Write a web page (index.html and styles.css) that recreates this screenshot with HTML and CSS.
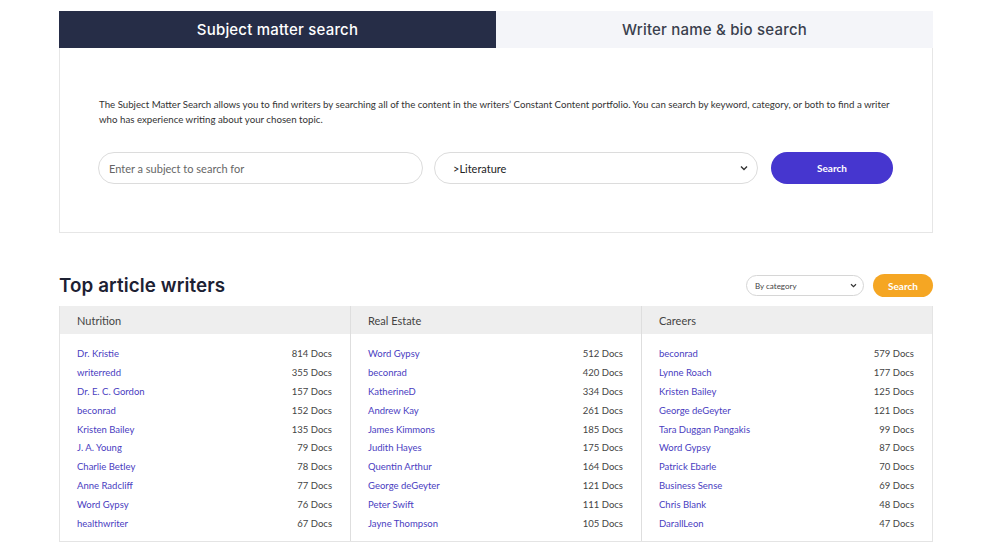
FILE: index.html
```html
<!DOCTYPE html>
<html>
<head>
<meta charset="utf-8">
<link rel="stylesheet" href="styles.css">
</head>
<body>
<div class="page">
  <div class="tabs">
    <div class="tab active">Subject matter search</div>
    <div class="tab">Writer name &amp; bio search</div>
  </div>
  <div class="panel">
    <p class="desc">The Subject Matter Search allows you to find writers by searching all of the content in the writers’ Constant Content portfolio. You can search by keyword, category, or both to find a writer who has experience writing about your chosen topic.</p>
    <div class="form-row">
      <div class="field input">Enter a subject to search for</div>
      <div class="field select"><span>&gt;Literature</span><svg class="chev" width="8" height="6" viewBox="0 0 8 6"><path d="M1 1.5 L4 4.5 L7 1.5" fill="none" stroke="#333" stroke-width="1.4"/></svg></div>
      <div class="btn-primary">Search</div>
    </div>
  </div>

  <div class="top-row">
    <h2 class="title">Top article writers</h2>
    <div class="filters">
      <div class="small-select"><span>By category</span><svg width="7" height="5" viewBox="0 0 8 6"><path d="M1 1.5 L4 4.5 L7 1.5" fill="none" stroke="#333" stroke-width="1.4"/></svg></div>
      <div class="btn-orange">Search</div>
    </div>
  </div>

  <div class="table">
    <div class="col">
      <div class="col-head">Nutrition</div>
      <ul class="list">
        <li><a>Dr. Kristie</a><span>814 Docs</span></li>
        <li><a>writerredd</a><span>355 Docs</span></li>
        <li><a>Dr. E. C. Gordon</a><span>157 Docs</span></li>
        <li><a>beconrad</a><span>152 Docs</span></li>
        <li><a>Kristen Bailey</a><span>135 Docs</span></li>
        <li><a>J. A. Young</a><span>79 Docs</span></li>
        <li><a>Charlie Betley</a><span>78 Docs</span></li>
        <li><a>Anne Radcliff</a><span>77 Docs</span></li>
        <li><a>Word Gypsy</a><span>76 Docs</span></li>
        <li><a>healthwriter</a><span>67 Docs</span></li>
      </ul>
    </div>
    <div class="col">
      <div class="col-head">Real Estate</div>
      <ul class="list">
        <li><a>Word Gypsy</a><span>512 Docs</span></li>
        <li><a>beconrad</a><span>420 Docs</span></li>
        <li><a>KatherineD</a><span>334 Docs</span></li>
        <li><a>Andrew Kay</a><span>261 Docs</span></li>
        <li><a>James Kimmons</a><span>185 Docs</span></li>
        <li><a>Judith Hayes</a><span>175 Docs</span></li>
        <li><a>Quentin Arthur</a><span>164 Docs</span></li>
        <li><a>George deGeyter</a><span>121 Docs</span></li>
        <li><a>Peter Swift</a><span>111 Docs</span></li>
        <li><a>Jayne Thompson</a><span>105 Docs</span></li>
      </ul>
    </div>
    <div class="col">
      <div class="col-head">Careers</div>
      <ul class="list">
        <li><a>beconrad</a><span>579 Docs</span></li>
        <li><a>Lynne Roach</a><span>177 Docs</span></li>
        <li><a>Kristen Bailey</a><span>125 Docs</span></li>
        <li><a>George deGeyter</a><span>121 Docs</span></li>
        <li><a>Tara Duggan Pangakis</a><span>99 Docs</span></li>
        <li><a>Word Gypsy</a><span>87 Docs</span></li>
        <li><a>Patrick Ebarle</a><span>70 Docs</span></li>
        <li><a>Business Sense</a><span>69 Docs</span></li>
        <li><a>Chris Blank</a><span>48 Docs</span></li>
        <li><a>DarallLeon</a><span>47 Docs</span></li>
      </ul>
    </div>
  </div>
</div>
</body>
</html>
```
FILE: styles.css
```css
* { box-sizing: border-box; }
html, body { margin: 0; padding: 0; background: #fff; }
body { font-family: "Lato", "Liberation Sans", sans-serif; color: #333; }

.page { width: 874px; margin: 0 0 0 59px; padding-top: 11px; }

.tabs { display: flex; height: 37px; }
.tab {
  flex: 1; display: flex; align-items: center; justify-content: center;
  font-family: "Inter", "Noto Sans", sans-serif; font-weight: 500; font-size: 15px;
  background: #f4f5f9; color: #3a3f4d; letter-spacing: 0.2px;
}
.tab.active { background: #262d47; color: #fff; }

.panel {
  border: 1px solid #e6e6e6; border-top: none;
  padding: 49px 38px 48px 38px;
}
.desc { margin: 0 0 25px 1px; font-size: 9.7px; line-height: 15px; color: #333; }

.form-row { display: flex; align-items: center; }
.field {
  height: 32px; border: 1px solid #dcdcdc; border-radius: 16px;
  display: flex; align-items: center; font-size: 11px;
}
.input { width: 325px; padding-left: 10px; color: #666; }
.select { width: 324px; margin-left: 11px; padding: 0 9px 0 18px; justify-content: space-between; color: #222; }
.btn-primary {
  width: 122px; height: 32px; margin-left: 13px; border-radius: 16px;
  background: #4636cf; color: #fff; font-size: 10px; font-weight: 700;
  display: flex; align-items: center; justify-content: center;
}

.top-row { display: flex; align-items: center; justify-content: space-between; margin-top: 41px; height: 23px; }
.title { margin: 0; font-family: "Inter", "Noto Sans", sans-serif; font-weight: 600; font-size: 18.8px; color: #1d2133; letter-spacing: 0.1px; }
.filters { display: flex; align-items: center; }
.small-select {
  width: 118px; height: 21px; border: 1px solid #d6d6d6; border-radius: 11px;
  display: flex; align-items: center; justify-content: space-between;
  padding: 0 6px 0 8px; font-size: 8px; color: #444;
}
.btn-orange {
  width: 60px; height: 23px; margin-left: 9px; border-radius: 12px;
  background: #f5a623; color: #fff; font-size: 10px; font-weight: 700;
  display: flex; align-items: center; justify-content: center;
}

.table { display: flex; margin-top: 9px; border-right: 1px solid #e4e4e4; border-bottom: 1px solid #e4e4e4; }
.col { flex: 1; border-left: 1px solid #dedede; }
.col:first-child { border-left: 1px solid #e4e4e4; }
.col-head {
  height: 28px; background: #eeeeee; display: flex; align-items: center;
  padding-left: 17px; font-size: 11px; color: #444;
}
.list { list-style: none; margin: 0; padding: 10px 18px 8px 17px; }
.list li { display: flex; justify-content: space-between; height: 18.9px; align-items: center; font-size: 9.5px; }
.list a { color: #4a3dbf; }
.list span { color: #444; }
```
